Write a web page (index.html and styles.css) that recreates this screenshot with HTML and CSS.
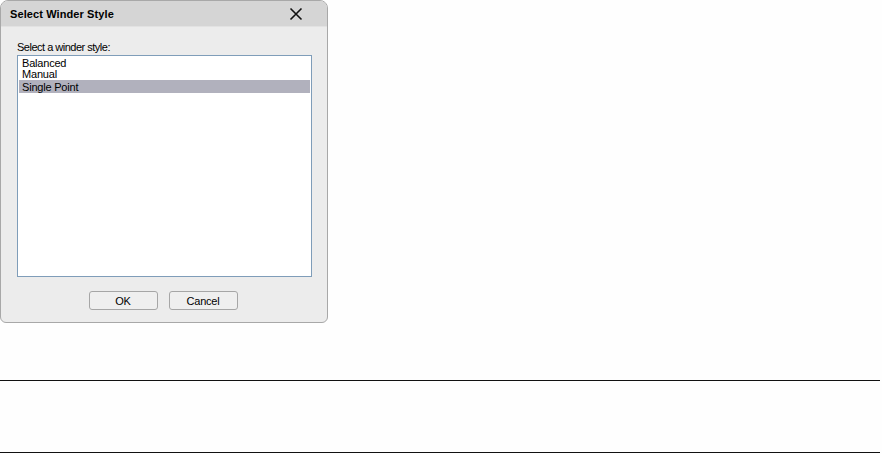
FILE: index.html
```html
<!DOCTYPE html>
<html lang="en">
<head>
  <meta charset="UTF-8" />
  <title>Select Winder Style</title>
  <link rel="stylesheet" href="styles.css">
</head>
<body>
  <div class="dialog">
    <div class="title-bar">
      <span class="title">Select Winder Style</span>
      <svg class="close" width="14" height="14" viewBox="0 0 14 14">
        <path d="M1.5 1.5 L12.5 12.5 M12.5 1.5 L1.5 12.5" stroke="#111" stroke-width="1.6" fill="none" />
      </svg>
    </div>
    <div class="dialog-body">
      <div class="prompt">Select a winder style:</div>
      <div class="listbox">
        <div class="item">Balanced</div>
        <div class="item">Manual</div>
        <div class="item selected">Single Point</div>
      </div>
      <div class="buttons">
        <button class="btn">OK</button>
        <button class="btn">Cancel</button>
      </div>
    </div>
  </div>

  <div class="rule-band"></div>
</body>
</html>
```

FILE: styles.css
```css
html, body {
  margin: 0;
  padding: 0;
  background: #fefefe;
  font-family: "Liberation Sans", Arial, sans-serif;
  font-size: 11px;
  color: #000;
}

.dialog {
  width: 326px;
  height: 321px;
  border: 1px solid #a8a8a8;
  border-radius: 8px 8px 6px 6px;
  background: #ececec;
  overflow: hidden;
  display: flex;
  flex-direction: column;
}

.title-bar {
  height: 25px;
  background: #d5d5d5;
  border-bottom: 1px solid #e2e2e2;
  display: flex;
  align-items: center;
  justify-content: space-between;
  padding: 0 24px 0 9px;
}

.title {
  font-weight: bold;
  font-size: 11px;
  letter-spacing: 0.1px;
}

.close {
  display: block;
  margin-top: 1px;
}

.dialog-body {
  flex: 1;
  padding: 13px 15px 0 16px;
  display: flex;
  flex-direction: column;
}

.prompt {
  height: 15px;
  line-height: 14px;
  letter-spacing: -0.5px;
}

.listbox {
  height: 218px;
  border: 1px solid #7f9db9;
  background: #fff;
  padding: 1px;
}

.item {
  height: 11px;
  line-height: 12px;
  padding: 0 3px;
  letter-spacing: -0.2px;
}

.item.selected {
  height: 13px;
  line-height: 14px;
  margin-top: 1px;
  background: #b1b1bd;
}

.buttons {
  display: flex;
  justify-content: center;
  gap: 11px;
  margin-top: 14px;
  padding-right: 3px;
}

.btn {
  width: 69px;
  height: 19px;
  padding: 0;
  border: 1px solid #a6a6a6;
  border-radius: 3px;
  background: #efefef;
  font-family: "Liberation Sans", Arial, sans-serif;
  font-size: 11px;
  letter-spacing: -0.2px;
  color: #000;
}

.rule-band {
  margin-top: 57px;
  height: 71px;
  width: 880px;
  border-top: 1px solid #111;
  border-bottom: 1px solid #111;
}
```
